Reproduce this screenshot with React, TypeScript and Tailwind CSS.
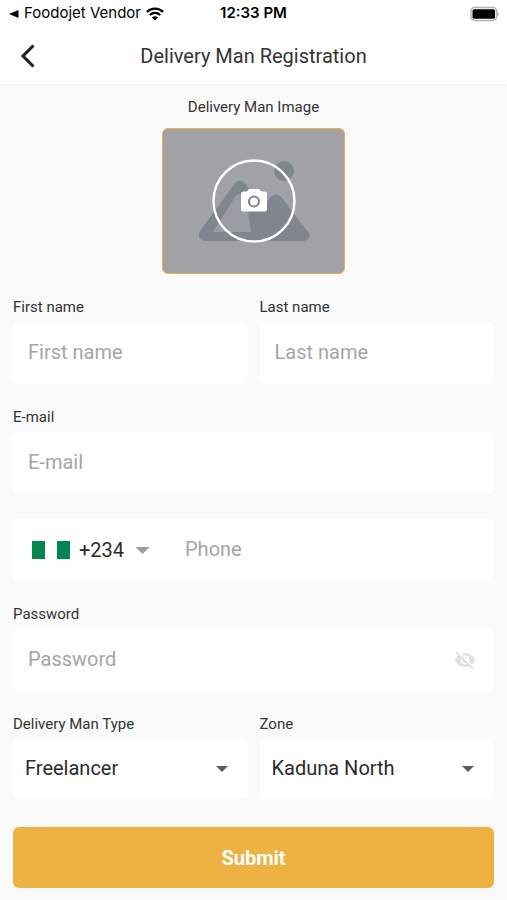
import type { ReactNode } from 'react';

const INPUT =
  'h-[62px] w-full min-w-0 rounded-md bg-white px-[15px] pb-0.5 text-[20px] text-[#2b2b2b] placeholder:text-[#a5a5a5] outline-none';

function Label({ id, children }: { id: string; children: ReactNode }) {
  return (
    <label htmlFor={id} className="text-[15px] leading-5 text-[#333333]">
      {children}
    </label>
  );
}

function TextField({ id, label, type = 'text' }: { id: string; label: string; type?: string }) {
  return (
    <div className="flex min-w-0 flex-1 flex-col gap-[5px]">
      <Label id={id}>{label}</Label>
      <input id={id} type={type} placeholder={label} className={INPUT} />
    </div>
  );
}

function Caret({ className }: { className: string }) {
  return (
    <svg viewBox="0 0 12 6" className={className} fill="currentColor" aria-hidden="true">
      <path d="M0 0h12L6 6z" />
    </svg>
  );
}

function SelectField({ id, label, options }: { id: string; label: string; options: string[] }) {
  return (
    <div className="flex min-w-0 flex-1 flex-col gap-[5px]">
      <Label id={id}>{label}</Label>
      <div className="relative">
        <select
          id={id}
          className="h-[60px] w-full appearance-none rounded-md bg-white pr-10 pb-0.5 pl-3 text-[20px] text-[#2b2b2b] outline-none"
        >
          {options.map((o) => (
            <option key={o}>{o}</option>
          ))}
        </select>
        <Caret className="pointer-events-none absolute top-[27px] right-5 h-1.5 w-3 text-[#5c5c5c]" />
      </div>
    </div>
  );
}

function StatusBar() {
  return (
    <div className="grid h-7 grid-cols-[1fr_auto_1fr] items-center bg-white px-2 pb-px font-['Inter',sans-serif] text-[15px] text-black">
      <div className="flex items-center gap-[5px] whitespace-nowrap">
        <svg viewBox="0 0 11 10" className="h-2.5 w-[11px]" aria-hidden="true">
          <path d="M1 5 10.500 1v8z" />
        </svg>
        <span>Foodojet Vendor</span>
        <svg viewBox="0 0 18 14" className="h-3.5 w-[18px]" fill="none" stroke="currentColor" aria-hidden="true">
          <path d="M.9 4.900C5.400.400 12.600.400 17.100 4.900" strokeWidth="2.300" />
          <path d="M3.800 8c2.900-2.900 7.500-2.900 10.400 0" strokeWidth="2.200" />
          <path d="M9 13.600 5.900 10.400c1.700-1.700 4.500-1.700 6.200 0z" fill="currentColor" stroke="none" />
        </svg>
      </div>
      <span className="font-semibold">12:33 PM</span>
      <svg viewBox="0 0 29 16" className="h-4 w-[29px] justify-self-end" aria-hidden="true">
        <rect x="1" y="1.500" width="25.500" height="13" rx="3.500" fill="#fff" stroke="#b5b5b5" strokeWidth="1.500" />
        <rect x="2.500" y="3.300" width="22.500" height="9.400" rx="1.500" fill="#000" />
        <path d="M27.200 5.700c2.200.8 2.200 3.800 0 4.600z" fill="#b5b5b5" />
      </svg>
    </div>
  );
}

function ImagePicker() {
  return (
    <div className="flex flex-col items-center gap-[11px]">
      <span className="text-[15px] leading-5 text-[#333333]">Delivery Man Image</span>
      <button
        type="button"
        aria-label="Choose delivery man image"
        className="h-[146px] w-[183px] rounded-md border border-[#eab344] bg-[#a0a2a8]"
      >
        <svg viewBox="0 0 181 144" className="block h-full w-full" aria-hidden="true">
          <circle cx="121" cy="42" r="10" fill="#80868d" />
          <path
            d="M43 112h96c7 0 9-5 6-9l-26-34c-4-5-9-4-12 0l-9 11-14-23c-4-7-10-7-14 0L37 102c-3 5 0 10 6 10z"
            fill="#80868d"
          />
          <path d="M50 103 72 68c2-4 5-4 7 0l6 15 3 20z" fill="#9a9da4" />
          <circle cx="91" cy="72" r="40.500" fill="none" stroke="#fff" strokeWidth="2.400" />
          <path
            d="M86 60h10l2.500 2.500h3A2.500 2.500 0 0 1 104 65v15a2.500 2.500 0 0 1-2.500 2.500h-21A2.500 2.500 0 0 1 78 80V65a2.500 2.500 0 0 1 2.500-2.500h3z"
            fill="#fff"
          />
          <circle cx="91" cy="72.500" r="5" fill="#fff" stroke="#80868d" strokeWidth="2.200" />
        </svg>
      </button>
    </div>
  );
}

function PhoneField() {
  return (
    <div className="mt-0.5 flex h-[62px] rounded-md bg-white">
      <div className="relative flex items-center pl-[19px]">
        <svg viewBox="0 0 38 18" className="pointer-events-none h-[18px] w-[38px]" aria-hidden="true">
          <path d="M0 0h13v18H0zM25 0h13v18H25z" fill="#038751" />
        </svg>
        <select
          aria-label="Country code"
          className="h-full w-[82px] appearance-none bg-transparent pl-[9px] text-[20px] text-[#2b2b2b] outline-none"
        >
          <option>+234</option>
        </select>
        <Caret className="pointer-events-none absolute top-[28px] right-0.5 h-[7px] w-[15px] text-[#9c9c9c]" />
      </div>
      <input type="tel" aria-label="Phone" placeholder="Phone" className={INPUT + ' ml-[18px]'} />
    </div>
  );
}

function PasswordField() {
  return (
    <div className="flex flex-col gap-[5px]">
      <Label id="password">Password</Label>
      <div className="flex h-[62px] items-center rounded-md bg-white pr-[18px]">
        <input id="password" type="password" placeholder="Password" className={INPUT} />
        <button type="button" aria-label="Show password" className="shrink-0 text-[#dedede]">
          <svg viewBox="0 0 24 24" className="size-[22px]" fill="currentColor" aria-hidden="true">
            <path d="M12 7c2.760 0 5 2.240 5 5 0 .650-.130 1.260-.360 1.830l2.920 2.920c1.510-1.260 2.700-2.890 3.430-4.750-1.730-4.390-6-7.500-11-7.500-1.400 0-2.740.250-3.980.700l2.160 2.160C10.740 7.130 11.350 7 12 7zM2 4.270l2.280 2.280.460.460C3.080 8.300 1.780 10.020 1 12c1.730 4.390 6 7.500 11 7.500 1.550 0 3.030-.300 4.380-.840l.420.420L19.730 22 21 20.730 3.270 3 2 4.270zM7.530 9.800l1.550 1.550c-.050.210-.080.430-.080.650 0 1.660 1.340 3 3 3 .220 0 .440-.030.650-.080l1.550 1.550c-.670.330-1.410.530-2.200.530-2.760 0-5-2.240-5-5 0-.790.200-1.530.530-2.200zm4.310-.780 3.150 3.150.020-.160c0-1.660-1.340-3-3-3l-.170.010z" />
          </svg>
        </button>
      </div>
    </div>
  );
}

export default function App() {
  return (
    <div className="flex min-h-screen flex-col bg-[#fafafa] font-['Roboto',sans-serif]">
      <StatusBar />
      <header className="grid h-14 grid-cols-[32px_1fr_32px] items-center bg-white px-3 shadow-[0_1px_3px_rgba(0,0,0,0.03)]">
        <button type="button" aria-label="Back" className="flex justify-center text-[#1c1c1c]">
          <svg viewBox="0 0 16 24" className="h-6 w-4" fill="none" stroke="currentColor" strokeWidth="3" aria-hidden="true">
            <path d="M13.500 1.500 3 12l10.500 10.500" />
          </svg>
        </button>
        <h1 className="text-center text-[20px] text-[#333333]">Delivery Man Registration</h1>
      </header>
      <main className="px-[13px] pt-[13px] pb-3">
        <ImagePicker />
        <form className="mt-[23px] flex flex-col gap-[23px]" onSubmit={(e) => e.preventDefault()}>
          <div className="flex gap-3">
            <TextField id="first" label="First name" />
            <TextField id="last" label="Last name" />
          </div>
          <TextField id="email" label="E-mail" type="email" />
          <PhoneField />
          <PasswordField />
          <div className="flex gap-3">
            <SelectField id="type" label="Delivery Man Type" options={['Freelancer', 'Salary Based']} />
            <SelectField id="zone" label="Zone" options={['Kaduna North', 'Kaduna South']} />
          </div>
          <button type="submit" className="mt-[5px] h-[61px] rounded-md bg-[#edb241] text-[20px] font-bold text-white">
            Submit
          </button>
        </form>
      </main>
    </div>
  );
}
